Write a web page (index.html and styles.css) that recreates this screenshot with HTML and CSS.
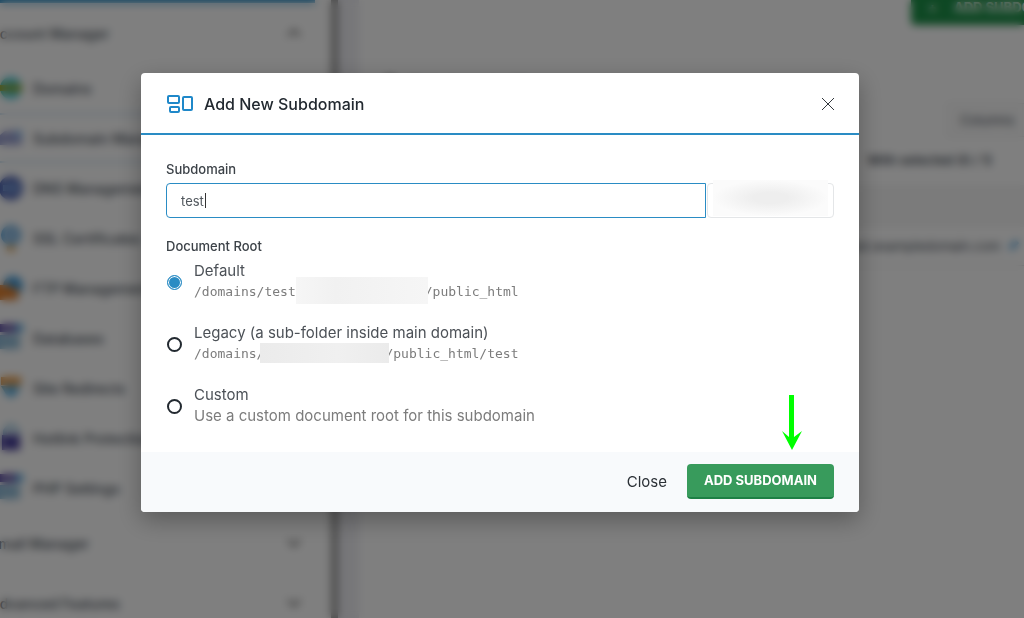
FILE: index.html
```html
<!DOCTYPE html>
<html lang="en">
<head>
  <meta charset="UTF-8">
  <meta name="viewport" content="width=device-width, initial-scale=1.0">
  <title>Subdomain Management</title>
  <link rel="stylesheet" href="styles.css">
</head>
<body>
  <div class="page" inert>
    <nav class="sidebar">
      <div class="sidebar-bar"></div>
      <div class="section-head">
        <span>Account Manager</span>
        <svg class="chevron" viewBox="0 0 14 8"><path d="M1 7l6-6 6 6"/></svg>
      </div>
      <ul class="menu">
        <li><a href="#">
          <svg class="menu-icon" viewBox="0 0 22 22"><circle cx="11" cy="11" r="11" fill="#45c8d8"/><path d="M0 8h22v6H0z" fill="#a0a010"/></svg>
          Domains</a></li>
        <li class="active"><a href="#">
          <svg class="menu-icon" viewBox="0 0 22 22"><path d="M0 8l5-4h12v14H0z" fill="#9aa0d0"/><path d="M15 3h7v8h-7z" fill="#8fb8e8"/><path d="M15 11h7v7h-7z" fill="#9aa0d0"/></svg>
          Subdomain Management</a></li>
        <li><a href="#">
          <svg class="menu-icon" viewBox="0 0 22 22"><circle cx="11" cy="11" r="12" fill="#4a5fae"/><path d="M3 8h16v6H3z" fill="#8fb8e8"/></svg>
          DNS Management</a></li>
        <li><a href="#">
          <svg class="menu-icon" viewBox="0 0 22 22"><circle cx="11" cy="8" r="8" fill="#a8c8e8" stroke="#60a8dc" stroke-width="4"/><path d="M7 19h8v5H7z" fill="#e09838"/></svg>
          SSL Certificates</a></li>
        <li><a href="#">
          <svg class="menu-icon" viewBox="0 0 22 22"><circle cx="13" cy="9" r="10" fill="#3c98d8"/><path d="M0 8h9l3 3h6v12H0z" fill="#e08030"/></svg>
          FTP Management</a></li>
        <li><a href="#">
          <svg class="menu-icon" viewBox="0 0 22 22"><path d="M0 8h20v14H0z" fill="#90bcd8"/><path d="M0-3h16v8H0z" fill="#5848a0"/><path d="M16-3h7v8h-7z" fill="#50a8e0"/></svg>
          Databases</a></li>
        <li><a href="#">
          <svg class="menu-icon" viewBox="0 0 22 22"><path d="M1 0h20v8H1z" fill="#e89840"/><path d="M1 9h20l-5 8-5 4-5-4z" fill="#50a8dc"/></svg>
          Site Redirects</a></li>
        <li><a href="#">
          <svg class="menu-icon" viewBox="0 0 22 22"><path d="M5 9V4q6-10 12 0v5" fill="none" stroke="#90c0dc" stroke-width="4"/><path d="M2 8h18v15H2z" fill="#453c98"/></svg>
          Hotlink Protection</a></li>
        <li><a href="#">
          <svg class="menu-icon" viewBox="0 0 22 22"><path d="M0 8h20v14H0z" fill="#90bcd8"/><path d="M0-3h16v8H0z" fill="#5848a0"/><path d="M16-3h7v8h-7z" fill="#50a8e0"/></svg>
          PHP Settings</a></li>
      </ul>
      <div class="section-head">
        <span>Email Manager</span>
        <svg class="chevron" viewBox="0 0 14 8"><path d="M1 1l6 6 6-6"/></svg>
      </div>
      <div class="section-head">
        <span>Advanced Features</span>
        <svg class="chevron" viewBox="0 0 14 8"><path d="M1 1l6 6 6-6"/></svg>
      </div>
    </nav>
    <div class="scroll-track"></div>
    <div class="gutter"></div>
    <main class="content">
      <div class="toolbar">
        <button class="button page-add"><span class="plus">+</span>ADD SUBDOMAIN</button>
      </div>
      <h1 class="page-title"><span class="dot"></span>Subdomain Management</h1>
      <div class="table-tools">
        <button class="columns">Columns</button>
        <p>With selected (0 / 1)</p>
      </div>
      <table class="domains">
        <thead><tr><th>Subdomain</th></tr></thead>
        <tbody>
          <tr><td>test.exampledomain.com
            <svg class="pencil" viewBox="0 0 12 12"><path d="M1 11l1-4 6-6 3 3-6 6z"/></svg></td></tr>
        </tbody>
      </table>
    </main>
  </div>

  <div class="overlay">
    <form class="modal" role="dialog" aria-labelledby="modalTitle">
      <div class="modal-header">
        <svg class="modal-icon" viewBox="0 0 26 20">
          <rect x="1" y="2" width="11" height="7" rx="1"/>
          <rect x="3" y="13" width="9" height="5" rx="1"/>
          <rect x="16" y="3" width="9" height="13" rx="1"/>
        </svg>
        <h2 id="modalTitle">Add New Subdomain</h2>
        <button type="button" class="close-icon" aria-label="Close dialog">
          <svg viewBox="0 0 12 12"><path d="M0 0l12 12M12 0L0 12"/></svg>
        </button>
      </div>

      <div class="modal-body">
        <label class="field-label" for="subdomain">Subdomain</label>
        <div class="input-group">
          <input type="text" id="subdomain" value="test" autocomplete="off" spellcheck="false">
          <span class="caret"></span>
          <div class="suffix"><span class="suffix-hidden"></span></div>
        </div>

        <fieldset class="roots">
          <legend class="field-label">Document Root</legend>
          <div class="root">
            <input type="radio" name="root" id="rootDefault" checked>
            <label for="rootDefault">Default
              <code>/domains/test<span class="masked masked-tall"></span>/public_html</code>
            </label>
          </div>
          <div class="root">
            <input type="radio" name="root" id="rootLegacy">
            <label for="rootLegacy">Legacy (a sub-folder inside main domain)
              <code>/domains/<span class="masked"></span>/public_html/test</code>
            </label>
          </div>
          <div class="root">
            <input type="radio" name="root" id="rootCustom">
            <label for="rootCustom">Custom
              <small>Use a custom document root for this subdomain</small>
            </label>
          </div>
        </fieldset>
      </div>

      <div class="modal-footer">
        <button type="button" class="link-button">Close</button>
        <button type="submit" class="button">ADD SUBDOMAIN</button>
      </div>

      <svg class="arrow" viewBox="0 0 20 55"><path d="M7 0h5v42l8-6-10 19L0 36l7 6z"/></svg>
    </form>
  </div>
</body>
</html>
```

FILE: styles.css
```css
* {
  margin: 0;
  padding: 0;
  box-sizing: border-box;
}

body {
  height: 100vh;
  overflow: hidden;
  background: white;
  color: #4a525c;
  font-family: Inter, 'Open Sans', sans-serif;
  font-size: 13px;
}

button,
input {
  color: inherit;
  font-family: inherit;
}

/* page behind the dialog */
.page {
  display: flex;
  height: 100vh;
  overflow: hidden;
}

.sidebar {
  flex: 0 0 341px;
  margin-left: -10px;
  padding-right: 16px;
  font-size: 14px;
  font-weight: 500;
}

.sidebar-bar {
  height: 3px;
  background: #2a8cc4;
}

.section-head {
  display: flex;
  align-items: center;
  justify-content: space-between;
  height: 60px;
  padding-right: 14px;
}

.chevron {
  width: 14px;
  height: 8px;
  fill: none;
  stroke: #555;
  stroke-width: 2;
}

.menu {
  list-style: none;
}

.menu a {
  display: flex;
  align-items: center;
  gap: 11px;
  height: 50px;
  padding-left: 10px;
  color: inherit;
  text-decoration: none;
  white-space: nowrap;
}

.menu .active a {
  border-top: 2px solid #c4def0;
  border-bottom: 2px solid #c4def0;
}

.menu-icon {
  width: 22px;
  height: 22px;
  overflow: visible;
}

.scroll-track {
  flex: 0 0 7px;
  background: #999;
}

.gutter {
  flex: 0 0 21px;
  background: #eeeef3;
}

.content {
  flex: 1;
  margin-right: -60px;
}

.toolbar {
  display: flex;
  justify-content: flex-end;
  height: 25px;
  align-items: flex-end;
}

.page-title {
  display: flex;
  align-items: center;
  gap: 12px;
  height: 30px;
  margin: 46px 0 2px 24px;
  font-size: 18px;
  font-weight: 500;
}

.dot {
  width: 14px;
  height: 18px;
  border-radius: 50%;
  background: #222;
}

.table-tools {
  display: flex;
  flex-direction: column;
  align-items: flex-end;
  gap: 15px;
  font-weight: 600;
}

.columns {
  width: 137px;
  height: 34px;
  padding-left: 12px;
  border: 1px solid #e8e8e8;
  background: #fafafa;
  font-size: 13px;
  text-align: left;
}

.table-tools p {
  padding-right: 92px;
}

.domains {
  width: 100%;
  margin-top: 17px;
  border-collapse: collapse;
  text-align: right;
}

.domains th {
  height: 42px;
  padding-right: 400px;
  background: #f6f6f6;
}

.domains td {
  height: 38px;
  padding-right: 64px;
  border-bottom: 1px solid #ddd;
}

.pencil {
  width: 12px;
  height: 12px;
  margin-left: 4px;
  fill: #3c98d8;
}

/* dialog */
.overlay {
  position: fixed;
  inset: 0;
  display: flex;
  align-items: flex-start;
  justify-content: center;
  padding: 73px 24px 0 0;
  background: rgba(0, 0, 0, 0.5);
  backdrop-filter: blur(4px);
}

.modal {
  position: relative;
  width: 100%;
  max-width: 718px;
  border-radius: 4px;
  background: white;
  box-shadow: 0 8px 24px rgba(0, 0, 0, 0.3);
}

.modal-header {
  display: flex;
  align-items: center;
  gap: 11px;
  height: 62px;
  padding: 2px 25px 0;
  border-bottom: 2px solid #2a8cc4;
}

.modal-icon {
  width: 26px;
  height: 20px;
  margin-left: 1px;
  fill: none;
  stroke: #1f88c9;
  stroke-width: 2;
}

.modal-header h2 {
  flex: 1;
  color: #222930;
  font-size: 16px;
  font-weight: 500;
}

.close-icon {
  display: flex;
  border: none;
  background: none;
  cursor: pointer;
}

.close-icon svg {
  width: 12px;
  height: 12px;
  overflow: visible;
  stroke: #33383d;
}

.modal-body {
  padding: 24px 25px 26px;
}

.field-label {
  display: block;
  margin-bottom: 4px;
  color: #3c4248;
  font-size: 13px;
  font-weight: 500;
  line-height: 20px;
}

.input-group {
  position: relative;
  display: flex;
  gap: 1px;
  margin-bottom: 18px;
}

.input-group input {
  flex: 1;
  min-width: 0;
  height: 35px;
  padding: 0 14px;
  border: 1px solid #2a8cc4;
  border-radius: 4px 0 0 4px;
  outline: none;
  color: #50565c;
  font-size: 13px;
}

.caret {
  position: absolute;
  top: 10px;
  left: 39px;
  width: 1px;
  height: 15px;
  background: #333;
}

.suffix {
  width: 127px;
  height: 35px;
  padding: 0 5px;
  border: 1px solid #e4e6e8;
  border-radius: 4px;
}

.suffix-hidden {
  display: block;
  height: 36px;
  margin-top: -4px;
  background: radial-gradient(closest-side, #eeeeee 30%, #fbfbfb 100%);
}

.roots {
  border: none;
}

.root {
  display: flex;
  align-items: center;
  gap: 12px;
  margin-bottom: 20px;
}

.root:last-child {
  margin-bottom: 0;
}

.root input {
  appearance: none;
  width: 15px;
  height: 15px;
  margin: 3px 0 0 1px;
  border: 2px solid #222930;
  border-radius: 50%;
  background: white;
}

.root input:checked {
  border: 1px solid #2a8cc4;
  background: #2a8cc4;
  box-shadow: inset 0 0 0 1px white;
}

.root label {
  color: #4c5157;
  font-size: 15px;
  line-height: 21px;
}

.root code,
.root small {
  display: block;
  height: 21px;
  color: #7c7c7c;
  font-size: 15px;
}

.root code {
  font-family: 'DejaVu Sans Mono', monospace;
  font-size: 13px;
  white-space: nowrap;
}

.masked {
  position: relative;
  display: inline-block;
  width: 129px;
  height: 20px;
  margin: 0 -4px;
  background: linear-gradient(90deg, #ebebeb, #f0f0f0 60%, #ebebeb);
  vertical-align: top;
}

.masked-tall {
  width: 132px;
  height: 27px;
  margin: -4px -3px -4px 0;
  background: linear-gradient(90deg, #f6f6f6, #f1f1f1 30%, #f6f6f6);
}

.modal-footer {
  display: flex;
  align-items: center;
  justify-content: flex-end;
  gap: 20px;
  height: 60px;
  padding: 0 25px 2px;
  border-radius: 0 0 4px 4px;
  background: #f8fafc;
}

.link-button {
  border: none;
  background: none;
  color: #2b3036;
  font-size: 15px;
  cursor: pointer;
}

.button {
  height: 35px;
  padding: 0 17px;
  border: none;
  border-bottom: 2px solid #1d8045;
  border-radius: 4px;
  background: #389b5c;
  color: white;
  font-size: 13px;
  font-weight: 700;
  cursor: pointer;
}

.page-add {
  flex: none;
  background: #1d9048;
}

.plus {
  display: inline-block;
  width: 26px;
  text-align: left;
}

.arrow {
  position: absolute;
  right: 57px;
  bottom: 62px;
  width: 20px;
  height: 55px;
  fill: #0f0;
}
```
